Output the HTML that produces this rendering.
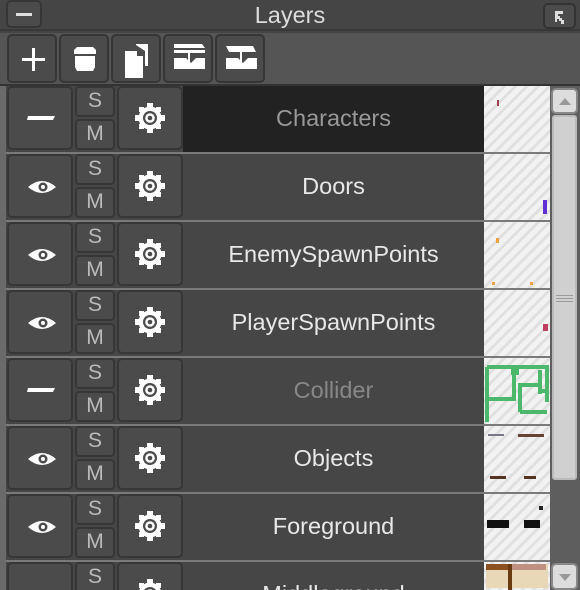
<!DOCTYPE html>
<html><head><meta charset="utf-8"><style>
*{margin:0;padding:0;box-sizing:border-box}
html,body{width:580px;height:590px;overflow:hidden}
body{background:#444;font-family:"Liberation Sans",sans-serif}
#w{position:relative;width:580px;height:590px;overflow:hidden}
.abs{position:absolute}
.title{left:0;top:0;width:580px;height:31px;background:#454545;border-bottom:2px solid #383838}
.title span{position:absolute;left:0;right:0;top:2px;text-align:center;color:#ddd;font-size:23.5px}
.btn{position:absolute;background:#4b4b4b;border:2px solid #363636;border-radius:5px}
.tool{top:33px;left:0;width:580px;height:53px;background:#555;border-bottom:2px solid #333}
.strip{left:0;top:86px;width:6px;height:504px;background:#6a6a6a}
.row{position:absolute;left:6px;width:478px;height:68px;background:#464646;border-bottom:2px solid #7a7a7a}
.row .name{position:absolute;left:177px;width:301px;top:0;height:66px;line-height:64px;text-align:center;color:#e8e8e8;font-size:23.5px}
.sm{position:absolute;left:69px;width:40px;background:#4b4b4b;border:2px solid #363636;border-radius:4px;color:#bbb;font-size:21px;text-align:center;line-height:26px}
.thumb{position:absolute;left:484px;width:66px;height:68px;border-bottom:2px solid #7a7a7a;background:repeating-linear-gradient(135deg,#f2f2f2 0 5px,#e0e0e0 5px 8px)}
.sb{left:550px;top:86px;width:30px;height:504px;background:#5e5e5e}
</style></head><body><div id="w">
<div class="abs title"><span>Layers</span></div>
<div class="btn" style="left:6px;top:0;width:36px;height:28px"><div class="abs" style="left:8px;top:11px;width:16px;height:3px;background:#ddd"></div></div>
<div class="btn" style="left:543px;top:3px;width:33px;height:26px;border-color:#333"><svg class="abs" style="left:10px;top:6px" width="12" height="13"><path d="M0 0h8v3h-5v2l2 0v2h2v2h2v4h-3v-3h-2v-2h-2v3h-2z" fill="#ddd"/></svg></div>
<div class="abs tool"></div>
<div class="btn" style="left:7px;top:34px;width:50px;height:49px"><div class="abs" style="left:13px;top:22px;width:23px;height:3px;background:#fff"></div><div class="abs" style="left:23px;top:12px;width:3px;height:23px;background:#fff"></div></div>
<div class="btn" style="left:59px;top:34px;width:50px;height:49px"><svg class="abs" style="left:11px;top:9px" width="28" height="30"><path d="M5 2h16l3 3v4h-22v-4zM3 11h20v11l-2 4h-16l-2-4z" fill="#fff"/></svg></div>
<div class="btn" style="left:111px;top:34px;width:50px;height:49px"><svg class="abs" style="left:10px;top:6px" width="32" height="36"><path d="M13 2h12v22h-3v-15l-9-6z M2 9h12v5h6v22h-18z" fill="#fff"/></svg></div>
<div class="btn" style="left:163px;top:34px;width:50px;height:49px"><svg class="abs" style="left:6px;top:8px" width="36" height="32"><path d="M3 0h28l3 4h-31zM3 6h31v3h-31zM3 14h12l5 5 5-5h9v11h-31z" fill="#fff"/><path d="M18 9v9" stroke="#fff" stroke-width="2"/></svg></div>
<div class="btn" style="left:215px;top:34px;width:50px;height:49px"><svg class="abs" style="left:6px;top:8px" width="36" height="32"><path d="M3 2h27l3 6h-27zM3 14h12l5 5 5-5h9v11h-31z" fill="#fff"/><path d="M18 8v10" stroke="#fff" stroke-width="2"/></svg></div>
<div class="abs strip"></div>

<svg width="0" height="0" style="position:absolute"><defs>
<g id="gear"><path d="M13 1h6v4h-6zM13 27h6v4h-6zM1 13h4v6h-4zM27 13h4v6h-4zM5 5h5v5h-5zM22 5h5v5h-5zM5 22h5v5h-5zM22 22h5v5h-5z" fill="#fff"/><circle cx="16" cy="16" r="11.5" fill="#fff"/><circle cx="16" cy="16" r="7" fill="#4b4b4b"/><circle cx="16" cy="16" r="4.8" fill="#fff"/><circle cx="16" cy="16" r="2.3" fill="#4b4b4b"/></g>
<g id="eye"><path d="M0 9 Q14 -3 28 9 Q14 21 0 9z" fill="#fff"/><circle cx="15" cy="9" r="4.5" fill="#4b4b4b"/><circle cx="15" cy="9" r="2" fill="#fff"/></g>
<g id="dash"><path d="M1 2h27l-2 4h-26z" fill="#fff"/></g>
</defs></svg>

<div class="row" style="top:86px"><div class="btn" style="left:1px;top:0;width:66px;height:64px"><svg class="abs" style="left:18px;top:26px" width="30" height="10"><use href="#dash"/></svg></div><div class="sm" style="top:0;height:31px">S</div><div class="sm" style="top:33px;height:31px">M</div><div class="btn" style="left:111px;top:0;width:66px;height:64px"><svg class="abs" style="left:15px;top:14px" width="32" height="32"><use href="#gear"/></svg></div><div class="name" style="background:#222;color:#999">Characters</div></div>
<div class="thumb" style="top:86px"><div class="abs" style="left:13px;top:14px;width:2px;height:6px;background:#a04050"></div></div>

<div class="row" style="top:154px"><div class="btn" style="left:1px;top:0;width:66px;height:64px"><svg class="abs" style="left:19px;top:22px" width="30" height="18"><use href="#eye"/></svg></div><div class="sm" style="top:0;height:31px">S</div><div class="sm" style="top:33px;height:31px">M</div><div class="btn" style="left:111px;top:0;width:66px;height:64px"><svg class="abs" style="left:15px;top:14px" width="32" height="32"><use href="#gear"/></svg></div><div class="name">Doors</div></div>
<div class="thumb" style="top:154px"><div class="abs" style="left:59px;top:46px;width:4px;height:14px;background:#6030d0"></div></div>

<div class="row" style="top:222px"><div class="btn" style="left:1px;top:0;width:66px;height:64px"><svg class="abs" style="left:19px;top:22px" width="30" height="18"><use href="#eye"/></svg></div><div class="sm" style="top:0;height:31px">S</div><div class="sm" style="top:33px;height:31px">M</div><div class="btn" style="left:111px;top:0;width:66px;height:64px"><svg class="abs" style="left:15px;top:14px" width="32" height="32"><use href="#gear"/></svg></div><div class="name">EnemySpawnPoints</div></div>
<div class="thumb" style="top:222px"><div class="abs" style="left:12px;top:16px;width:3px;height:5px;background:#f0a040"></div><div class="abs" style="left:8px;top:60px;width:3px;height:3px;background:#f0a040"></div><div class="abs" style="left:46px;top:60px;width:3px;height:3px;background:#f0a040"></div></div>

<div class="row" style="top:290px"><div class="btn" style="left:1px;top:0;width:66px;height:64px"><svg class="abs" style="left:19px;top:22px" width="30" height="18"><use href="#eye"/></svg></div><div class="sm" style="top:0;height:31px">S</div><div class="sm" style="top:33px;height:31px">M</div><div class="btn" style="left:111px;top:0;width:66px;height:64px"><svg class="abs" style="left:15px;top:14px" width="32" height="32"><use href="#gear"/></svg></div><div class="name">PlayerSpawnPoints</div></div>
<div class="thumb" style="top:290px"><div class="abs" style="left:59px;top:34px;width:5px;height:7px;background:#c04060"></div></div>

<div class="row" style="top:358px"><div class="btn" style="left:1px;top:0;width:66px;height:64px"><svg class="abs" style="left:18px;top:26px" width="30" height="10"><use href="#dash"/></svg></div><div class="sm" style="top:0;height:31px">S</div><div class="sm" style="top:33px;height:31px">M</div><div class="btn" style="left:111px;top:0;width:66px;height:64px"><svg class="abs" style="left:15px;top:14px" width="32" height="32"><use href="#gear"/></svg></div><div class="name" style="color:#888">Collider</div></div>
<div class="thumb" style="top:358px"><svg class="abs" style="left:0;top:0" width="66" height="66"><path d="M3 9h60v35M3 9v55M3 41h27v-32M36 54v-27h20v6h7M56 12v24M36 54h27" stroke="#4cb86c" stroke-width="4" fill="none"/><rect x="27" y="7" width="8" height="10" fill="#4cb86c"/></svg></div>

<div class="row" style="top:426px"><div class="btn" style="left:1px;top:0;width:66px;height:64px"><svg class="abs" style="left:19px;top:22px" width="30" height="18"><use href="#eye"/></svg></div><div class="sm" style="top:0;height:31px">S</div><div class="sm" style="top:33px;height:31px">M</div><div class="btn" style="left:111px;top:0;width:66px;height:64px"><svg class="abs" style="left:15px;top:14px" width="32" height="32"><use href="#gear"/></svg></div><div class="name">Objects</div></div>
<div class="thumb" style="top:426px"><div class="abs" style="left:4px;top:8px;width:16px;height:2px;background:#778"></div><div class="abs" style="left:34px;top:8px;width:26px;height:3px;background:#643"></div><div class="abs" style="left:6px;top:50px;width:16px;height:3px;background:#532"></div><div class="abs" style="left:40px;top:50px;width:12px;height:3px;background:#532"></div></div>

<div class="row" style="top:494px"><div class="btn" style="left:1px;top:0;width:66px;height:64px"><svg class="abs" style="left:19px;top:22px" width="30" height="18"><use href="#eye"/></svg></div><div class="sm" style="top:0;height:31px">S</div><div class="sm" style="top:33px;height:31px">M</div><div class="btn" style="left:111px;top:0;width:66px;height:64px"><svg class="abs" style="left:15px;top:14px" width="32" height="32"><use href="#gear"/></svg></div><div class="name">Foreground</div></div>
<div class="thumb" style="top:494px"><div class="abs" style="left:55px;top:12px;width:4px;height:4px;background:#222"></div><div class="abs" style="left:3px;top:26px;width:22px;height:8px;background:#111"></div><div class="abs" style="left:40px;top:26px;width:16px;height:8px;background:#111"></div></div>

<div class="row" style="top:562px;height:28px;overflow:hidden;border-bottom:0"><div class="btn" style="left:1px;top:0;width:66px;height:64px"><svg class="abs" style="left:18px;top:26px" width="30" height="10"><use href="#dash"/></svg></div><div class="sm" style="top:0;height:31px">S</div><div class="btn" style="left:111px;top:0;width:66px;height:64px"><svg class="abs" style="left:15px;top:14px" width="32" height="32"><use href="#gear"/></svg></div><div class="name">Middleground</div></div>
<div class="thumb" style="top:562px;height:28px;border-bottom:0;overflow:hidden"><div class="abs" style="left:2px;top:2px;width:62px;height:24px;background:#e8d8b8"></div><div class="abs" style="left:2px;top:2px;width:22px;height:6px;background:#8a5020"></div><div class="abs" style="left:28px;top:2px;width:34px;height:6px;background:#c09080"></div><div class="abs" style="left:24px;top:2px;width:4px;height:26px;background:#6a3a10"></div></div>

<div class="abs sb"></div>
<div class="btn" style="left:551px;top:88px;width:27px;height:26px;background:#ddd;border-color:#888"><div class="abs" style="left:6px;top:8px;width:0;height:0;border-left:6px solid transparent;border-right:6px solid transparent;border-bottom:7px solid #999"></div></div>
<div class="abs" style="left:552px;top:115px;width:25px;height:365px;background:#d0d0d0;border:2px solid #bbb;border-radius:3px"><div class="abs" style="left:2px;top:178px;width:17px;height:1px;background:#999"></div><div class="abs" style="left:2px;top:181px;width:17px;height:1px;background:#999"></div><div class="abs" style="left:2px;top:184px;width:17px;height:1px;background:#999"></div></div>
<div class="btn" style="left:551px;top:563px;width:27px;height:27px;background:#ddd;border-color:#888"><div class="abs" style="left:6px;top:9px;width:0;height:0;border-left:6px solid transparent;border-right:6px solid transparent;border-top:7px solid #999"></div></div>
</div></body></html>
